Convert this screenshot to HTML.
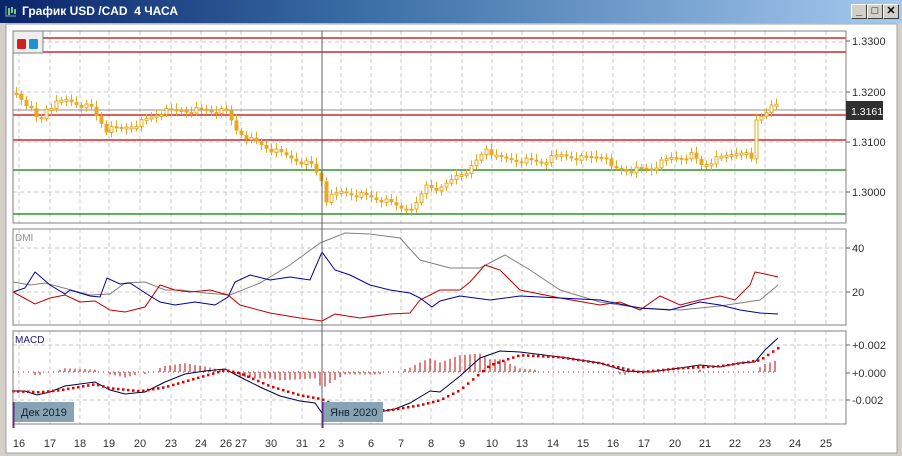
<!DOCTYPE html>
<html><head><meta charset="utf-8">
<style>
html,body{margin:0;padding:0;width:902px;height:456px;overflow:hidden;background:#d4d0c8;font-family:"Liberation Sans",sans-serif}
#tb{position:absolute;left:0;top:0;width:902px;height:23px;background:linear-gradient(90deg,#0a246a 0%,#3a6ea5 40%,#a6caf0 100%)}
#tb .t{position:absolute;left:22px;top:4px;color:#fff;font-weight:bold;font-size:12px}
.btn{position:absolute;top:4px;width:14px;height:13px;background:#d4d0c8;border:1px solid;border-color:#fff #404040 #404040 #fff;font-size:11px;font-weight:bold;text-align:center;line-height:13px;color:#000}
#ch{position:absolute;left:0;top:0}
</style></head><body>
<div id="tb"><svg width="14" height="14" style="position:absolute;left:4px;top:4px"><path d="M2 2v10h10" stroke="#8aa" fill="none"/><path d="M5 4v7M8 3v6M11 5v5" stroke="#7c7" stroke-width="2"/></svg><span class="t">График USD /CAD&nbsp; 4 ЧАСА</span>
<div class="btn" style="left:851px">_</div><div class="btn" style="left:867px">□</div><div class="btn" style="left:883px">✕</div></div>
<svg id="ch" width="902" height="456" style="top:0">
<rect x="6" y="24" width="891" height="429" fill="#fff"/>
<rect x="6" y="24" width="891" height="429" fill="none" stroke="#a0a0a0"/>
<g id="g"></g>
</svg>
<script>
const NS="http://www.w3.org/2000/svg",g=document.getElementById('g');
function el(t,a,txt){const e=document.createElementNS(NS,t);for(const k in a)e.setAttribute(k,a[k]);if(txt!=null)e.textContent=txt;g.appendChild(e);return e}
function interp(pts,x){if(x<=pts[0][0])return pts[0][1];for(let i=1;i<pts.length;i++){if(x<=pts[i][0]){const[a,b]=pts[i-1],[c,d]=pts[i];return b+(d-b)*(x-a)/(c-a)}}return pts[pts.length-1][1]}
const vx=[19,50,80,109,140,171,201,226,241,271,302,322,341,371,401,431,462,492,522,553,583,613,644,675,705,735,765,795,826];
const labels=["16","17","18","19","20","23","24","26","27","30","31","2","3","6","7","8","9","10","13","14","15","16","17","20","21","22","23","24","25"];
const panels=[[13,31,833,192],[13,229,833,96],[13,331,833,93]];
panels.forEach(p=>{vx.forEach(x=>{if(x!==322)el('line',{x1:x,y1:p[1],x2:x,y2:p[1]+p[3],stroke:'#c8c8c8','stroke-dasharray':'4,3'})})});
[42,92,142,192].forEach(y=>el('line',{x1:13,y1:y,x2:846,y2:y,stroke:'#c8c8c8','stroke-dasharray':'4,3'}));
[248,292].forEach(y=>el('line',{x1:13,y1:y,x2:846,y2:y,stroke:'#c8c8c8','stroke-dasharray':'4,3'}));
[345,400].forEach(y=>el('line',{x1:13,y1:y,x2:846,y2:y,stroke:'#c8c8c8','stroke-dasharray':'4,3'}));
[[38,'#c00000'],[52,'#c00000'],[115,'#c00000'],[140,'#c00000'],[170,'#008000'],[214,'#008000']].forEach(l=>el('line',{x1:13,y1:l[0],x2:846,y2:l[0],stroke:l[1],'stroke-width':1.2}));
el('line',{x1:13,y1:110,x2:846,y2:110,stroke:'#909090'});
const cp=[[15,93],[25,103],[38,123],[45,108],[65,100],[90,108],[105,130],[120,128],[140,122],[160,112],[180,110],[200,110],[225,112],[235,130],[250,140],[270,150],[290,158],[310,165],[320,180],[325,200],[340,192],[360,195],[380,200],[400,208],[415,205],[425,185],[440,190],[455,175],[470,168],[485,148],[495,158],[520,160],[540,162],[560,155],[580,158],[600,155],[610,168],[630,170],[650,168],[670,158],[690,155],[700,165],[720,158],[740,150],[750,160],[755,120],[765,110],[775,106]];
let prev=interp(cp,15);
for(let x=15;x<=778;x+=5){const c=interp(cp,x)+((x*7)%11-5)*0.6;const o=prev;prev=c;const top=Math.min(o,c),h=Math.max(2,Math.abs(c-o));
el('line',{x1:x+1.5,y1:top-3-(x%4),x2:x+1.5,y2:top+h+3+(x%3),stroke:'#e8a820'});
if(c<o)el('rect',{x:x,y:top,width:3,height:h,fill:'#fff',stroke:'#e8a820','stroke-width':1});else el('rect',{x:x-0.5,y:top,width:4,height:h,fill:'#e8a820'});}
function pl(pts,col,w){el('polyline',{points:pts.map(p=>p.join(',')).join(' '),fill:'none',stroke:col,'stroke-width':w||1})}
pl([[13,282],[30,285],[45,283],[60,287],[90,295],[110,294],[125,283],[145,282],[165,290],[180,290],[205,293],[230,295],[260,283],[290,265],[320,243],[345,233],[370,234],[400,238],[420,260],[450,268],[480,268],[505,255],[530,270],[560,290],[600,302],[640,308],[680,310],[720,306],[760,300],[778,285]],'#808080');
pl([[13,292],[35,304],[50,298],[65,295],[80,302],[95,301],[110,310],[125,312],[145,307],[160,285],[175,290],[190,292],[210,290],[228,295],[240,305],[270,313],[300,318],[322,321],[335,314],[360,318],[390,314],[410,313],[420,300],[440,290],[460,290],[470,282],[485,265],[500,270],[520,290],[560,298],[600,305],[620,302],[640,310],[660,296],[680,305],[700,300],[720,296],[735,300],[750,285],[755,272],[765,274],[778,277]],'#c00000');
pl([[13,292],[25,288],[35,272],[50,285],[65,294],[70,290],[90,296],[100,297],[107,278],[120,284],[130,283],[150,296],[160,302],[175,305],[195,302],[215,305],[228,297],[235,282],[250,275],[270,280],[290,277],[310,280],[322,252],[335,270],[350,275],[370,285],[390,290],[410,293],[420,298],[432,307],[440,301],[460,296],[490,300],[520,296],[560,298],[600,300],[640,308],[670,310],[700,302],[720,305],[740,310],[760,313],[778,314]],'#000099');
const mc=[[13,391],[25,391],[37,395],[50,392],[65,386],[95,382],[110,390],[125,394],[145,392],[165,382],[185,374],[205,371],[225,369],[240,377],[260,387],[280,396],[300,401],[315,403],[322,413],[330,412],[380,412],[395,409],[410,403],[430,391],[440,392],[460,376],[480,358],[500,351],[520,352],[560,357],[600,363],[625,371],[650,372],[680,368],[700,365],[720,367],[740,363],[755,362],[765,350],[778,338]];
const sg=[[13,391],[40,392],[60,390],[95,384],[110,388],[140,391],[165,387],[200,377],[225,370],[240,373],[270,386],[300,395],[322,399],[345,410],[390,410],[420,405],[440,400],[460,390],[490,365],[520,355],[560,357],[600,363],[640,372],[680,368],[720,366],[760,360],[778,348]];
el('line',{x1:13,y1:372,x2:778,y2:372,stroke:'#c00000','stroke-dasharray':'1,4'});
for(let x=15;x<=778;x+=5){const d=(interp(sg,x)-interp(mc,x))*1.2;if(Math.abs(d)>2)el('line',{x1:x,y1:372,x2:x,y2:372-d,stroke:'#c00000'})}
pl(mc,'#000040');
for(let x=13;x<=778;x+=5)el('rect',{x:x-1,y:interp(sg,x)-1,width:2.5,height:2.5,fill:'#e00000'});
panels.forEach(p=>el('rect',{x:p[0],y:p[1],width:p[2],height:p[3],fill:'none',stroke:'#808080'}));
el('line',{x1:322,y1:31,x2:322,y2:424,stroke:'#606060'});
el('rect',{x:13,y:31,width:30,height:22,fill:'#eee',stroke:'#808080'});
el('rect',{x:17,y:39,width:9,height:10,fill:'#d02020',rx:1.5});el('rect',{x:29,y:39,width:9,height:10,fill:'#2090d0',rx:1.5});
const T={'font-size':11,fill:'#303030','font-family':'Liberation Sans, sans-serif'};
[['1.3300',45],['1.3200',96],['1.3100',146],['1.3000',196],['40',252],['20',296],['+0.002',349],['+0.000',377],['-0.002',404]].forEach(a=>{el('line',{x1:846,y1:a[1]-4,x2:850,y2:a[1]-4,stroke:'#606060'});el('text',Object.assign({x:852,y:a[1]},T),a[0])});
el('rect',{x:846,y:101,width:37,height:19,fill:'#303030'});el('text',Object.assign({},T,{x:851,y:115,fill:'#fff','font-size':10.5}),'1.3161');
el('text',{x:15,y:241,'font-size':10,fill:'#909090','font-family':'Liberation Sans'},'DMI');
el('text',{x:15,y:343,'font-size':10,fill:'#202080','font-family':'Liberation Sans'},'MACD');
vx.forEach((x,i)=>el('text',Object.assign({x:x,y:447,'text-anchor':'middle'},T),labels[i]));
[[13,'Дек 2019'],[322,'Янв 2020']].forEach(m=>{el('rect',{x:m[0],y:402,width:61,height:20,fill:'#88a4b4'});el('line',{x1:m[0]+0.5,y1:402,x2:m[0]+0.5,y2:428,stroke:'#603080','stroke-width':2});el('text',Object.assign({},T,{x:m[0]+8,y:416,fill:'#102030'}),m[1])});
</script>
</body></html>
